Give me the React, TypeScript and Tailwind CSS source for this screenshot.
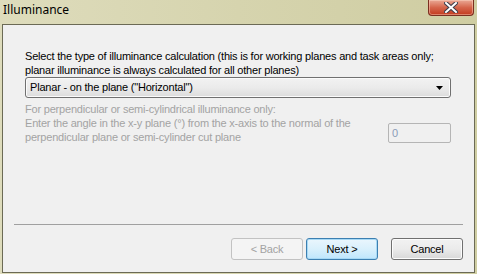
import React from 'react';

const CloseButton: React.FC = () => (
  <div className="relative mr-[3px] flex h-[16px] w-[46px] items-center justify-center rounded-b-[4px] border border-t-0 border-[#7b2f20] bg-gradient-to-b from-[#e9a895] via-[#d5654b] to-[#c2381c] shadow-[inset_0_0_0_1px_rgba(255,220,200,0.45)]">
    <svg width="14" height="11" viewBox="0 0 14 11" className="-mt-[1px]">
      <path d="M2 1 L12 10 M12 1 L2 10" stroke="#3d3d4a" strokeWidth="4" strokeLinecap="square" />
      <path d="M2 1 L12 10 M12 1 L2 10" stroke="#ffffff" strokeWidth="2" strokeLinecap="square" />
    </svg>
  </div>
);

const Button: React.FC<{ label: string; variant?: 'default' | 'primary' | 'disabled'; className?: string }> = ({
  label,
  variant = 'default',
  className = '',
}) => {
  const base = `flex h-[22px] w-[72px] items-center justify-center rounded-[3px] border text-[11px] leading-none ${className}`;
  if (variant === 'disabled')
    return <div className={`${base} border-[#c2c2c2] bg-[#f4f4f4] text-[#a3a3a3]`}>{label}</div>;
  if (variant === 'primary')
    return (
      <div
        className={`${base} border-[#3c7fb1] bg-gradient-to-b from-[#eaf6fd] via-[#d9f0fc] to-[#bee6fd] text-black shadow-[inset_0_0_0_1px_#a7d9f5]`}
      >
        {label}
      </div>
    );
  return (
    <div
      className={`${base} border-[#707070] bg-gradient-to-b from-[#f2f2f2] via-[#ebebeb] to-[#d8d8d8] text-black shadow-[inset_0_0_0_1px_#fcfcfc]`}
    >
      {label}
    </div>
  );
};

export default function App() {
  return (
    <div
      className="flex h-[274px] w-[477px] flex-col bg-gradient-to-r from-[#dedcbc] via-[#d6d4ae] to-[#cfcda2] tracking-[-0.2px]"
      style={{ fontFamily: '"Liberation Sans", Arial, sans-serif' }}
    >
      <div className="flex h-[24px] items-start justify-between">
        <span
          className="ml-[3px] mt-[2px] text-[12px] leading-[16px] tracking-normal text-black"
          style={{ fontFamily: '"Noto Sans", "Open Sans", sans-serif' }}
        >
          Illuminance
        </span>
        <CloseButton />
      </div>

      <div className="mb-[1px] ml-[2px] mr-[2px] flex flex-1 flex-col border border-[#6b6a55] bg-[#f0f0f0]">
        <div className="pl-[22px] pr-[22px] pt-[24px]">
          <p className="text-[11px] leading-[14px] text-black">
            Select the type of illuminance calculation (this is for working planes and task areas only;
            <br />
            planar illuminance is always calculated for all other planes)
          </p>

          <div className="relative mt-0 flex h-[21px] w-[426px] items-center rounded-[3px] border border-[#707070] bg-gradient-to-b from-[#f2f2f2] via-[#ebebeb] to-[#dcdcdc] pl-[4px] text-[11px] text-black shadow-[inset_0_0_0_1px_#fbfbfb]">
            Planar - on the plane ("Horizontal")
            <svg width="7" height="4" viewBox="0 0 7 4" className="absolute right-[7px] top-[8px]">
              <path d="M0 0 H7 L3.5 4 Z" fill="#000" />
            </svg>
          </div>

          <div className="mt-[4px] flex w-[426px] items-end justify-between">
            <p className="text-[11px] leading-[14px] text-[#a3a3a3]">
              For perpendicular or semi-cylindrical illuminance only:
              <br />
              Enter the angle in the x-y plane (°) from the x-axis to the normal of the
              <br />
              perpendicular plane or semi-cylinder cut plane
            </p>
            <div className="mb-[1px] flex h-[20px] w-[63px] items-center rounded-[2px] border border-[#b5b5b5] bg-[#f0f0f0] pl-[3px] text-[11px] text-[#8b9bb8]">
              0
            </div>
          </div>
        </div>

        <div className="mt-auto px-[11px]">
          <div className="h-px w-[449px] bg-[#a0a0a0]" />
          <div className="flex justify-end pb-[12px] pt-[13px]">
            <Button label="< Back" variant="disabled" />
            <Button label="Next >" variant="primary" className="ml-[3px]" />
            <Button label="Cancel" className="ml-[13px]" />
          </div>
        </div>
      </div>
    </div>
  );
}
